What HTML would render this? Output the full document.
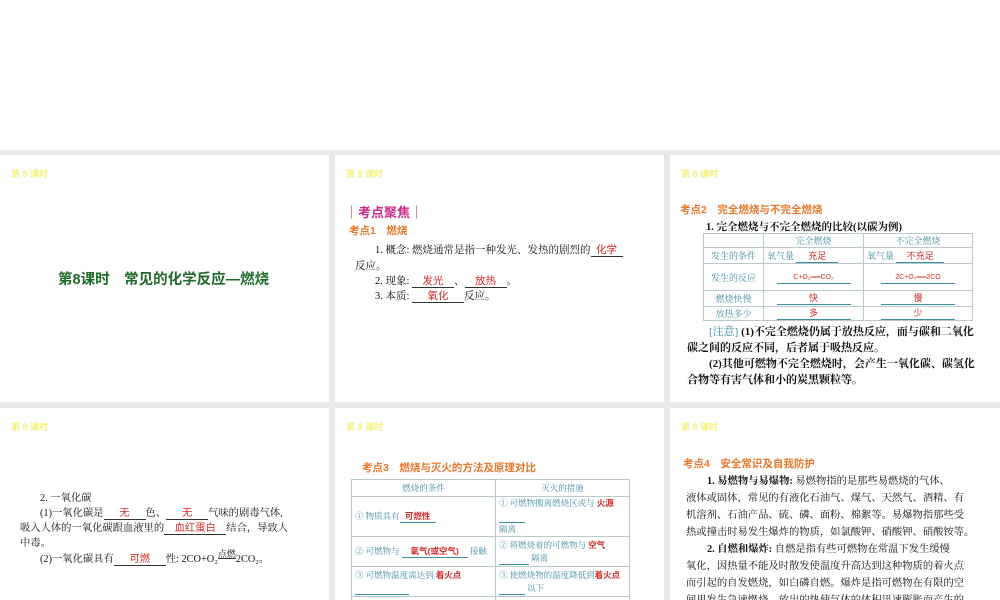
<!DOCTYPE html>
<html><head><meta charset="utf-8">
<style>
*{margin:0;padding:0;box-sizing:border-box}
body{width:1000px;height:600px;overflow:hidden;background:#fff;position:relative;font-family:"Liberation Serif","Noto Serif CJK SC",serif;font-size:10.3px;color:#111}
.bg{position:absolute;left:0;top:150px;width:1000px;height:450px;background:#e9e9e9}
.p{position:absolute;background:#fff;overflow:hidden}
.t{position:absolute;white-space:nowrap}
.hd{position:absolute;left:11px;top:12px;color:#f4f07a;font-family:"Liberation Sans","Noto Sans CJK SC",sans-serif;font-size:9px;font-weight:bold}
.or{color:#e8772a;font-family:"Liberation Sans","Noto Sans CJK SC",sans-serif;font-weight:bold;font-size:10.5px}
.r{color:#d42a2a;font-family:"Liberation Sans","Noto Sans CJK SC",sans-serif}
.u{display:inline-block;border-bottom:1px solid #333;text-align:center;line-height:11px}
.ub{display:inline-block;border-bottom:1px solid #3a8fa0;text-align:center;line-height:11px}
.tc{color:#3f8fa0}
table{position:absolute;border-collapse:collapse;table-layout:fixed}
td{border:1px solid #b9c9cc;font-size:9px;color:#3f8fa0;padding:0 3px;vertical-align:middle;white-space:nowrap;overflow:visible}
.t5 td{font-size:8.5px;line-height:13px}
</style></head><body>
<div class="bg"></div>

<!-- Panel 1 -->
<div class="p" style="left:0;top:155px;width:329px;height:247px">
 <div class="hd">第 8 课时</div>
 <div class="t" style="left:58px;top:113px;font-family:'Liberation Sans','Noto Sans CJK SC',sans-serif;font-size:14.5px;color:#1e6a28;font-weight:bold">第8课时　常见的化学反应—燃烧</div>
</div>

<!-- Panel 2 -->
<div class="p" style="left:335px;top:155px;width:329px;height:247px">
 <div class="hd">第 8 课时</div>
 <div class="t" style="left:10px;top:47px;color:#cc2a8a;font-family:'Liberation Sans','Noto Sans CJK SC',sans-serif;font-weight:bold;font-size:13px">｜考点聚焦｜</div>
 <div class="t or" style="left:14px;top:68px">考点1　燃烧</div>
 <div class="t" style="left:40px;top:87px;font-size:10.5px">1. 概念: 燃烧通常是指一种发光、发热的剧烈的<span class="u r" style="width:32px">化学</span></div>
 <div class="t" style="left:20px;top:103px;font-size:10.5px">反应。</div>
 <div class="t" style="left:40px;top:118px;font-size:10.5px">2. 现象: <span class="u r" style="width:42px">发光</span>、<span class="u r" style="width:42px">放热</span>。</div>
 <div class="t" style="left:40px;top:133px;font-size:10.5px">3. 本质: <span class="u r" style="width:52px">氧化</span>反应。</div>
</div>

<!-- Panel 3 -->
<div class="p" style="left:670px;top:155px;width:330px;height:247px">
 <div class="hd">第 8 课时</div>
 <div class="t or" style="left:10px;top:47px">考点2　完全燃烧与不完全燃烧</div>
 <div class="t" style="left:36px;top:64px;font-weight:bold;font-size:10.5px">1. 完全燃烧与不完全燃烧的比较(以碳为例)</div>
 <table style="left:33px;top:78px;width:270px">
  <tr style="height:14px"><td style="width:60px"></td><td style="width:100px;text-align:center">完全燃烧</td><td style="text-align:center">不完全燃烧</td></tr>
  <tr style="height:16px"><td style="text-align:center">发生的条件</td><td>氧气量 <span class="ub r" style="width:42px">充足</span></td><td>氧气量 <span class="ub r" style="width:48px">不充足</span></td></tr>
  <tr style="height:27px"><td style="text-align:center">发生的反应</td><td style="text-align:center"><span class="ub r" style="width:74px;font-size:7px">C+O₂══CO₂</span></td><td style="text-align:center"><span class="ub r" style="width:74px;font-size:7px">2C+O₂══2CO</span></td></tr>
  <tr style="height:16px"><td style="text-align:center">燃烧快慢</td><td style="text-align:center"><span class="ub r" style="width:74px">快</span></td><td style="text-align:center"><span class="ub r" style="width:74px">慢</span></td></tr>
  <tr style="height:12px"><td style="text-align:center">放热多少</td><td style="text-align:center"><span class="ub r" style="width:74px">多</span></td><td style="text-align:center"><span class="ub r" style="width:74px">少</span></td></tr>
 </table>
 <div class="t" style="left:39px;top:168px;font-weight:bold;font-size:11px"><span class="tc" style="font-weight:normal">[注意]</span> (1)不完全燃烧仍属于放热反应，而与碳和二氧化</div>
 <div class="t" style="left:17px;top:184px;font-weight:bold;font-size:11px">碳之间的反应不同，后者属于吸热反应。</div>
 <div class="t" style="left:39px;top:200px;font-weight:bold;font-size:11px">(2)其他可燃物不完全燃烧时，会产生一氧化碳、碳氢化</div>
 <div class="t" style="left:17px;top:216px;font-weight:bold;font-size:11px">合物等有害气体和小的炭黑颗粒等。</div>
</div>

<!-- Panel 4 -->
<div class="p" style="left:0;top:408px;width:329px;height:192px">
 <div class="hd">第 8 课时</div>
 <div class="t" style="left:40px;top:81px">2. 一氧化碳</div>
 <div class="t" style="left:40px;top:96px">(1)一氧化碳是<span class="u r" style="width:42px">无</span>色、<span class="u r" style="width:42px">无</span>气味的剧毒气体,</div>
 <div class="t" style="left:20px;top:111px">吸入人体的一氧化碳跟血液里的<span class="u r" style="width:62px">血红蛋白</span>结合，导致人</div>
 <div class="t" style="left:20px;top:126px">中毒。</div>
 <div class="t" style="left:40px;top:142px">(2)一氧化碳具有<span class="u r" style="width:52px">可燃</span>性: 2CO+O₂<span style="display:inline-block;border-bottom:1px solid #333;font-size:9px;line-height:8px;position:relative;top:-5px">点燃</span>2CO₂。</div>
</div>

<!-- Panel 5 -->
<div class="p" style="left:335px;top:408px;width:329px;height:192px">
 <div class="hd">第 8 课时</div>
 <div class="t or" style="left:27px;top:52px">考点3　燃烧与灭火的方法及原理对比</div>
 <table class="t5" style="left:16px;top:71px;width:279px">
  <tr style="height:17px"><td style="width:144px;text-align:center">燃烧的条件</td><td style="text-align:center">灭火的措施</td></tr>
  <tr style="height:36px"><td>① 物质具有<span class="ub r" style="width:36px;font-weight:bold;font-size:8.5px">可燃性</span></td><td>① 可燃物搬离燃烧区或与 <span class="r" style="font-weight:bold">火源</span><br><span class="ub" style="width:26px">&nbsp;</span><br>隔离</td></tr>
  <tr style="height:30px"><td>② 可燃物与 <span class="ub r" style="width:66px;font-weight:bold;font-size:8.5px">氧气(或空气)</span> 接触</td><td>② 将燃烧着的可燃物与 <span class="r" style="font-weight:bold">空气</span><br><span class="ub" style="width:30px">&nbsp;</span> 隔离</td></tr>
  <tr style="height:30px"><td>③ 可燃物温度需达到 <span class="r" style="font-weight:bold">着火点</span><br><span class="ub" style="width:54px">&nbsp;</span></td><td>③ 使燃烧物的温度降低到<span class="r" style="font-weight:bold">着火点</span><br><span class="ub" style="width:26px">&nbsp;</span> 以下</td></tr>
  <tr style="height:20px"><td>燃烧必须同时具备三个条件</td><td>破坏燃烧条件其中之一</td></tr>
 </table>
</div>

<!-- Panel 6 -->
<div class="p" style="left:670px;top:408px;width:330px;height:192px">
 <div class="hd">第 8 课时</div>
 <div class="t or" style="left:13px;top:48px">考点4　安全常识及自我防护</div>
 <div class="t" style="left:37px;top:64px;font-weight:bold">1. 易燃物与易爆物: <span style="font-weight:normal">易燃物指的是那些易燃烧的气体、</span></div>
 <div class="t" style="left:16px;top:81px">液体或固体，常见的有液化石油气、煤气、天然气、酒精、有</div>
 <div class="t" style="left:16px;top:98px">机溶剂、石油产品、硫、磷、面粉、棉絮等。易爆物指那些受</div>
 <div class="t" style="left:16px;top:115px">热或撞击时易发生爆炸的物质，如氯酸钾、硝酸钾、硝酸铵等。</div>
 <div class="t" style="left:37px;top:132px;font-weight:bold">2. 自燃和爆炸: <span style="font-weight:normal">自燃是指有些可燃物在常温下发生缓慢</span></div>
 <div class="t" style="left:16px;top:149px">氧化，因热量不能及时散发使温度升高达到这种物质的着火点</div>
 <div class="t" style="left:16px;top:166px">而引起的自发燃烧，如白磷自燃。爆炸是指可燃物在有限的空</div>
 <div class="t" style="left:16px;top:183px">间里发生急速燃烧，放出的热使气体的体积迅速膨胀而产生的</div>
</div>
</body></html>
